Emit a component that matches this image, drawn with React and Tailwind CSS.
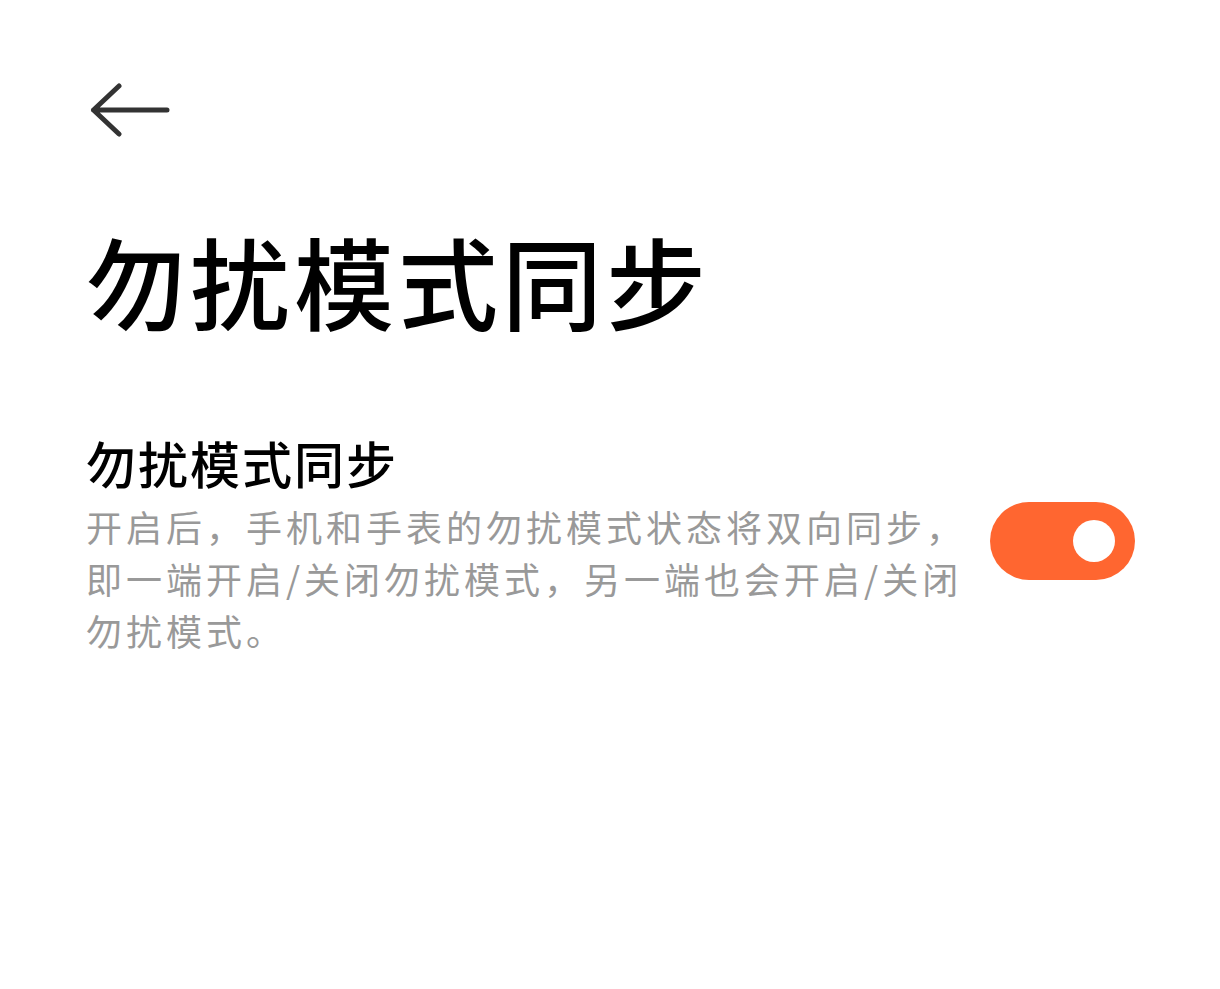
export default function App() {
  return (
    <div
      className="min-h-screen bg-white pl-[86px] pr-[85px] pt-[82px]"
      style={{ fontFamily: '"Noto Sans CJK SC", "Noto Sans", sans-serif' }}
    >
      {/* back */}
      <button type="button" className="ml-[4px] block">
        <svg width="80" height="56" viewBox="0 0 80 56" fill="none">
          <path
            d="M3.5 28 H77 M29 4 L3.5 28 L29 52"
            stroke="#333333"
            strokeWidth="5"
            strokeLinecap="round"
            strokeLinejoin="round"
          />
        </svg>
      </button>

      <h1 className="mt-[92px] text-[100px] leading-none font-medium tracking-[4px] text-black">
        勿扰模式同步
      </h1>

      <div className="mt-[107px] flex items-start justify-between">
        <div>
          <div className="text-[50px] leading-none font-medium tracking-[2px] text-black">
            勿扰模式同步
          </div>
          <div className="mt-[13px] text-[36px] leading-[52px] tracking-[4px] text-[#999999]">
            <div className="whitespace-nowrap">开启后，手机和手表的勿扰模式状态将双向同步，</div>
            <div className="whitespace-nowrap">即一端开启/关闭勿扰模式，另一端也会开启/关闭</div>
            <div className="whitespace-nowrap">勿扰模式。</div>
          </div>
        </div>

        <div className="mt-[65px] flex h-[78px] w-[145px] shrink-0 items-center justify-end rounded-full bg-[#ff6630] pr-[20px]">
          <div className="h-[42px] w-[42px] rounded-full bg-white" />
        </div>
      </div>
    </div>
  )
}
